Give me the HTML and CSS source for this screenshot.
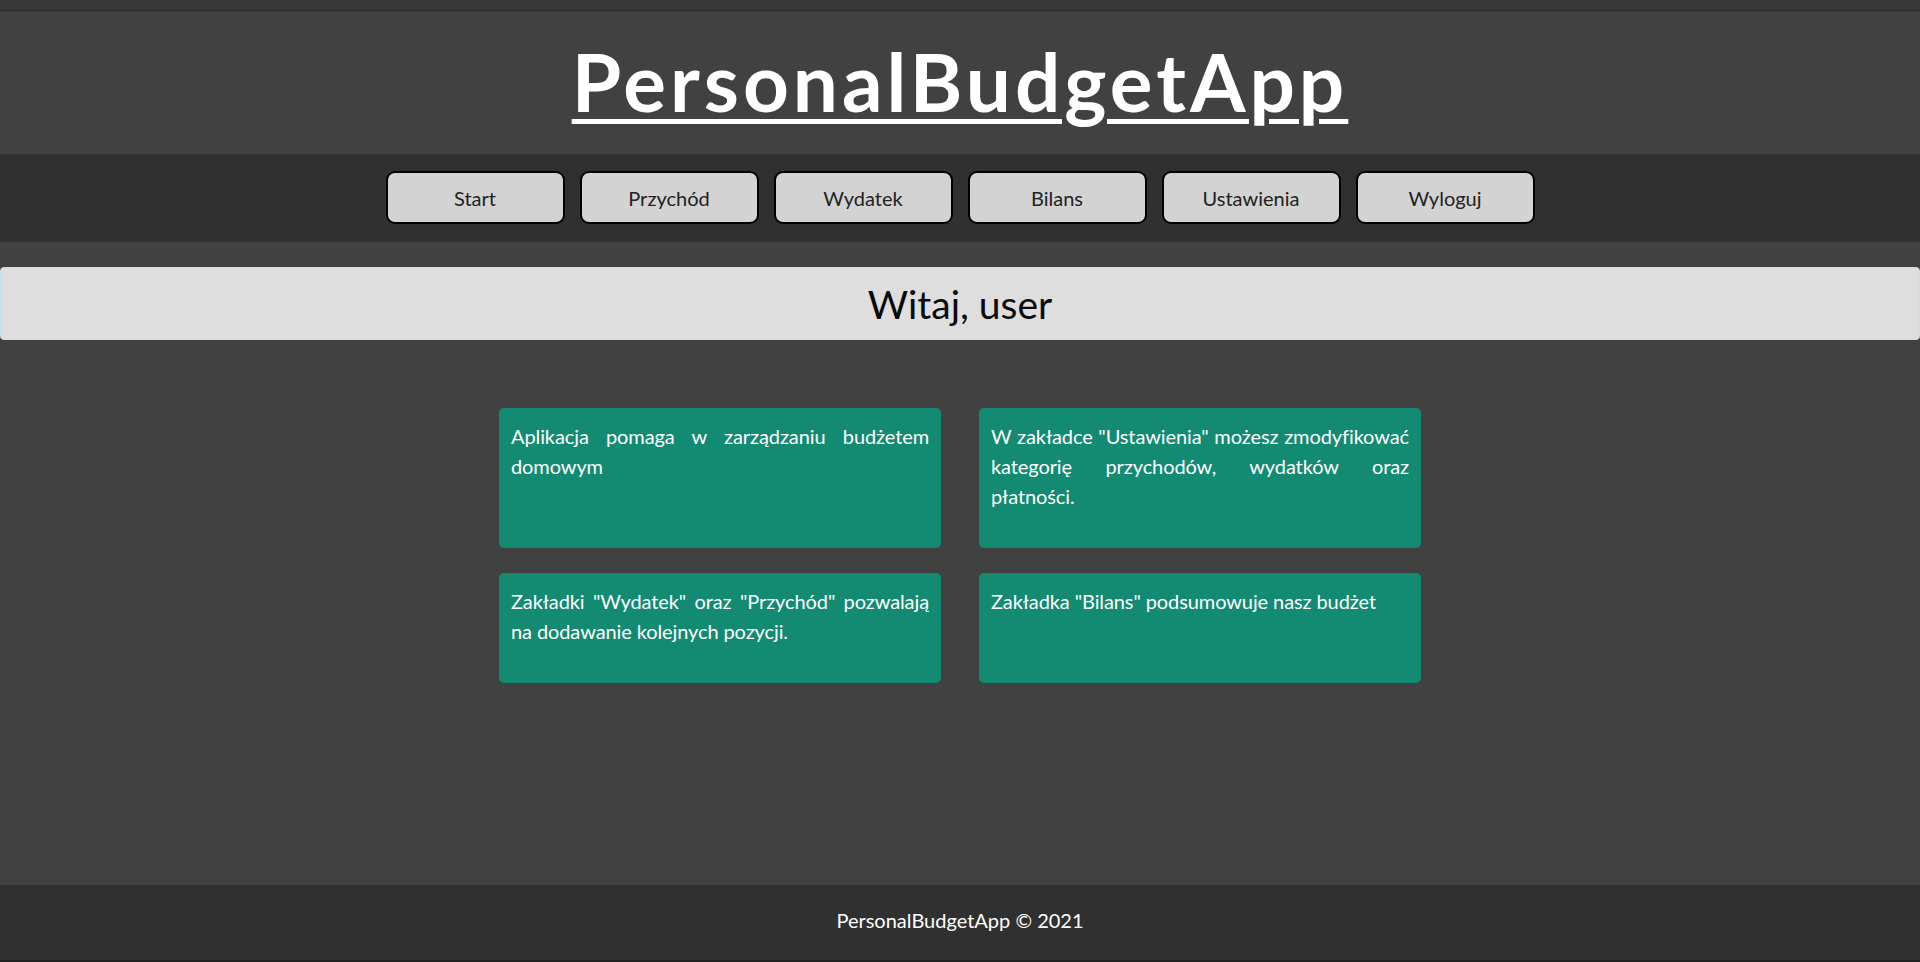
FILE: index.html
```html
<!DOCTYPE html>
<html lang="pl">
<head>
<meta charset="utf-8">
<title>PersonalBudgetApp</title>
<link rel="stylesheet" href="styles.css">
</head>
<body>
<div class="page">
  <div class="topbar"></div>
  <header class="header">
    <h1 class="logo"><a href="#">PersonalBudgetApp</a></h1>
  </header>
  <nav class="nav">
    <a class="nav-btn" href="#">Start</a>
    <a class="nav-btn" href="#">Przychód</a>
    <a class="nav-btn" href="#">Wydatek</a>
    <a class="nav-btn" href="#">Bilans</a>
    <a class="nav-btn" href="#">Ustawienia</a>
    <a class="nav-btn" href="#">Wyloguj</a>
  </nav>
  <main class="main">
    <div class="welcome">Witaj, user</div>
    <div class="cards">
      <div class="card"><p>Aplikacja pomaga w zarządzaniu budżetem domowym</p></div>
      <div class="card"><p>W zakładce "Ustawienia" możesz zmodyfikować kategorię przychodów, wydatków oraz płatności.</p></div>
      <div class="card"><p>Zakładki "Wydatek" oraz "Przychód" pozwalają na dodawanie kolejnych pozycji.</p></div>
      <div class="card"><p>Zakładka "Bilans" podsumowuje nasz budżet</p></div>
    </div>
  </main>
  <footer class="footer">PersonalBudgetApp © 2021</footer>
  <div class="bottombar"></div>
</div>
</body>
</html>
```
FILE: styles.css
```css
html, body {
  margin: 0;
  padding: 0;
}
body {
  background: #414141;
  font-family: Lato, "Open Sans", sans-serif;
  color: #fff;
}
.page {
  min-height: 962px;
  display: flex;
  flex-direction: column;
}
.topbar {
  height: 10px;
  background: #38383b;
  border-bottom: 1px solid #2b2b2d;
}
.header {
  height: 143px;
  display: flex;
  justify-content: center;
  align-items: flex-start;
}
.logo {
  margin: 0;
  padding-top: 22px;
  font-size: 80px;
  font-weight: 700;
  line-height: 96px;
  letter-spacing: 4px;
}
.logo a {
  color: #fff;
  text-decoration: underline;
  text-decoration-thickness: 5px;
  text-underline-offset: 7px;
}
.nav {
  background: #303030;
  height: 88px;
  box-sizing: border-box;
  padding-top: 17px;
  display: flex;
  justify-content: center;
  gap: 15px;
}
.nav-btn {
  width: 179px;
  height: 53px;
  box-sizing: border-box;
  border: 2px solid #000;
  border-radius: 9px;
  background: #d3d3d3;
  color: #222;
  font-size: 20px;
  text-decoration: none;
  display: flex;
  align-items: center;
  justify-content: center;
}
.main {
  padding-top: 25px;
}
.welcome {
  height: 73px;
  box-sizing: border-box;
  background: #dedede;
  border: 1px solid #bfe3ea;
  border-radius: 4px;
  color: #0a0a0a;
  font-size: 39px;
  display: flex;
  align-items: center;
  justify-content: center;
}
.cards {
  width: 922px;
  margin: 68px auto 0;
  display: grid;
  grid-template-columns: 442px 442px;
  column-gap: 38px;
  row-gap: 25px;
}
.card {
  background: #138a72;
  border-radius: 5px;
  padding: 13px 12px 37px 12px;
}
.card p {
  margin: 0;
  font-size: 20px;
  line-height: 30px;
  letter-spacing: -0.1px;
  text-align: justify;
}
.footer {
  margin-top: auto;
  height: 75px;
  background: #303030;
  display: flex;
  align-items: center;
  justify-content: center;
  font-size: 20px;
  padding-bottom: 6px;
  box-sizing: border-box;
}
.bottombar {
  height: 2px;
  background: #222;
}
```
